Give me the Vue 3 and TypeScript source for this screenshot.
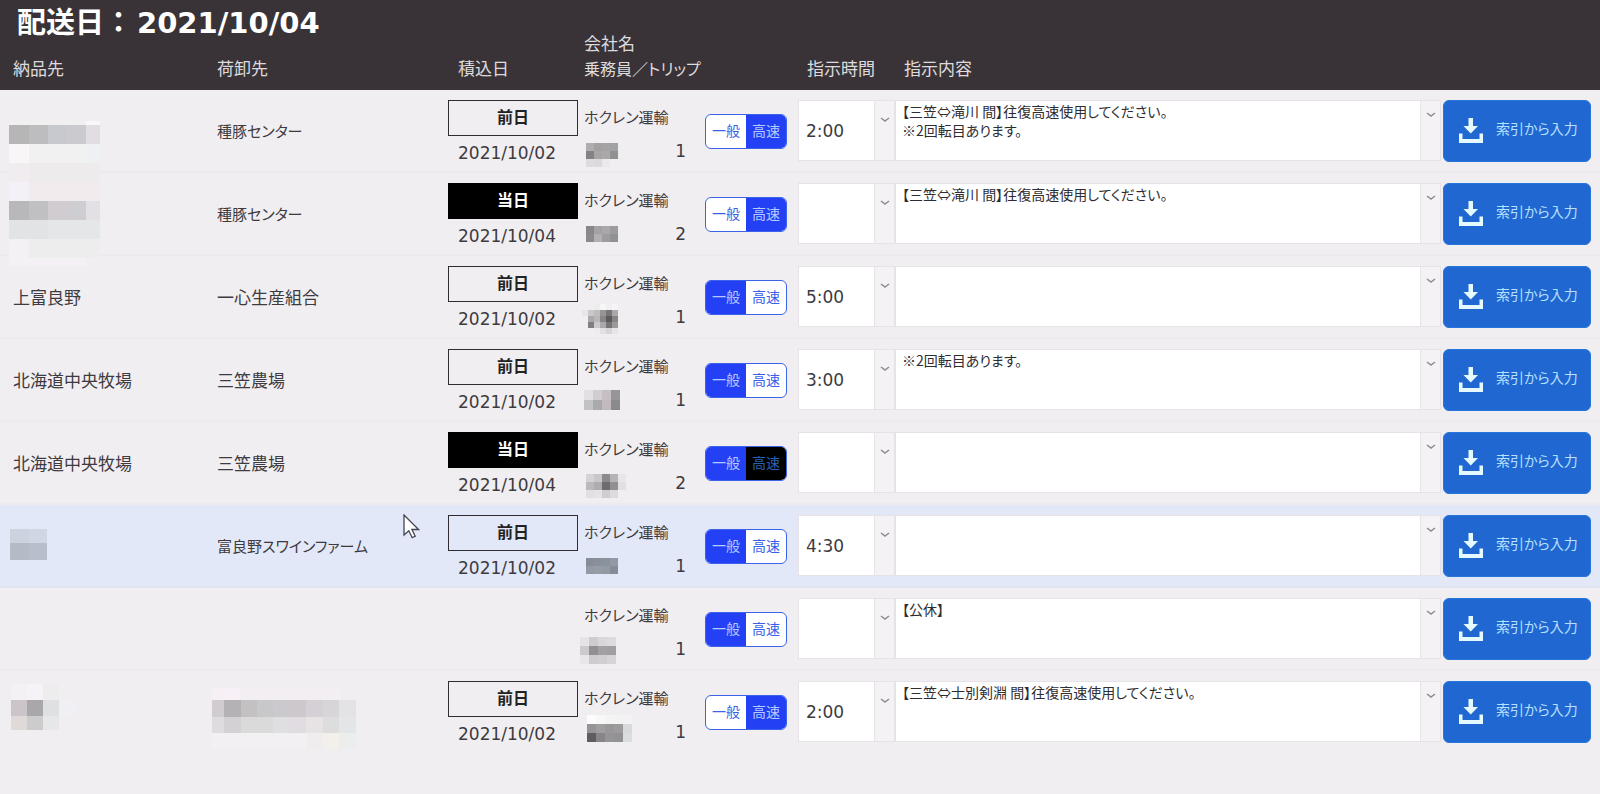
<script setup lang="ts">
import { reactive } from 'vue'

type Tile = [x: number, y: number, w: number, h: number, fill: string]

interface Mosaic {
  width: number
  height: number
  tiles: Tile[]
}

interface Delivery {
  id: number
  destination: string | Mosaic
  unloading: string | Mosaic
  loadType: '前日' | '当日' | ''
  loadDate: string
  company: string
  driver: Mosaic
  trip: number
  road: 'general' | 'highway'
  roadLocked?: boolean
  time: string
  note: string
  selected?: boolean
}

/** Lays out equal tiles from a grid of colours; an empty colour leaves a gap. */
function grid(size: [number, number], origin: [number, number], rows: string[][]): Mosaic {
  const tiles: Tile[] = []
  rows.forEach((row, r) =>
    row.forEach((fill, c) => {
      if (fill) tiles.push([origin[0] + c * size[0], origin[1] + r * size[1], size[0], size[1], fill])
    }),
  )
  const columns = Math.max(...rows.map((row) => row.length))
  return { width: origin[0] + columns * size[0], height: origin[1] + rows.length * size[1], tiles }
}

const isMosaic = (value: string | Mosaic): value is Mosaic => typeof value !== 'string'

/** Names written with katakana are set one step smaller so that they stay compact. */
const hasKana = (value: string | Mosaic) => !isMosaic(value) && /[\u30a0-\u30ff]/.test(value)

const deliveries = reactive<Delivery[]>([
  {
    id: 1,
    destination: {
      width: 91,
      height: 52,
      tiles: [
        [0, 0, 77, 4, '#f0f0f0'], [77, 0, 14, 4, '#f9f7f9'],
        [0, 4, 20, 19, '#b7b6b7'], [20, 4, 19, 19, '#bdbdbf'], [39, 4, 19, 19, '#c8c9ce'], [58, 4, 19, 19, '#cbcbcf'], [77, 4, 14, 19, '#e1dde3'],
        [0, 23, 20, 19, '#f9f6f8'], [20, 23, 57, 19, '#f1f1f1'], [77, 23, 14, 19, '#eef0f3'],
        [0, 42, 20, 10, '#f0ecef'], [20, 42, 71, 10, '#edebec'],
      ],
    },
    unloading: '種豚センター',
    loadType: '前日',
    loadDate: '2021/10/02',
    company: 'ホクレン運輸',
    driver: grid([8, 8], [2, 4], [
      ['#b0adae', '#a3a1a2', '#a5a4a5', '#a2a1a3'],
      ['#858283', '#a7a5a6', '#aaa9aa', '#929192'],
      ['#dedcde', '#dcdbdc', '#ebe9eb', ''],
    ]),
    trip: 1,
    road: 'highway',
    time: '2:00',
    note: '【三笠⇔滝川 間】往復高速使用してください。\n※2回転目あります。',
  },
  {
    id: 2,
    destination: {
      width: 91,
      height: 93,
      tiles: [
        [0, 0, 20, 9, '#f0ecef'], [20, 0, 71, 9, '#edebec'],
        [0, 9, 20, 19, '#f4f0f7'], [20, 9, 71, 19, '#f1ebee'],
        [0, 28, 20, 19, '#b8b7b9'], [20, 28, 19, 19, '#c0c0c3'], [39, 28, 19, 19, '#d0ccd0'], [58, 28, 19, 19, '#cecdd1'], [77, 28, 14, 19, '#e2e0e5'],
        [0, 47, 39, 19, '#e2e3e4'], [39, 47, 52, 19, '#e5e6e7'],
        [0, 66, 20, 27, '#f3f1f4'], [20, 66, 71, 19, '#ededee'], [20, 85, 57, 8, '#f5f0f5'],
      ],
    },
    unloading: '種豚センター',
    loadType: '当日',
    loadDate: '2021/10/04',
    company: 'ホクレン運輸',
    driver: grid([8, 8], [2, 4], [
      ['#888687', '#a3a2a4', '#aaa8aa', '#9c9b9d'],
      ['#8b898a', '#b2b0b3', '#9d9c9e', '#929193'],
    ]),
    trip: 2,
    road: 'highway',
    time: '',
    note: '【三笠⇔滝川 間】往復高速使用してください。',
  },
  {
    id: 3,
    destination: '上富良野',
    unloading: '一心生産組合',
    loadType: '前日',
    loadDate: '2021/10/02',
    company: 'ホクレン運輸',
    driver: grid([6, 6], [-2, -1], [
      ['', '', '#eeeced', '#f7f6f7', '#f1f0f1', '#f6f4f6'],
      ['#e7e5e7', '#c9c8c9', '#bfbebf', '#969495', '#777576', '#aaa8a9'],
      ['', '#aaa8a9', '#b9b8b9', '#878586', '#5c5a5b', '#878586'],
      ['', '#807e7f', '#cccacc', '#aaa8aa', '#777576', '#9b999a'],
      ['', '', '#eeeced', '#e2e0e2', '#d7d5d7', '#e7e5e7'],
    ]),
    trip: 1,
    road: 'general',
    time: '5:00',
    note: '',
  },
  {
    id: 4,
    destination: '北海道中央牧場',
    unloading: '三笠農場',
    loadType: '前日',
    loadDate: '2021/10/02',
    company: 'ホクレン運輸',
    driver: grid([9, 10], [0, 2], [
      ['#e2e0e2', '#d0ced1', '#c5bfc3', '#979597'],
      ['#c2c1c3', '#aaa9ac', '#c2b9bf', '#8a898c'],
    ]),
    trip: 1,
    road: 'general',
    time: '3:00',
    note: '※2回転目あります。',
  },
  {
    id: 5,
    destination: '北海道中央牧場',
    unloading: '三笠農場',
    loadType: '当日',
    loadDate: '2021/10/04',
    company: 'ホクレン運輸',
    driver: grid([8, 8], [2, 3], [
      ['#d6d3d5', '#c9c7ca', '#8c8a8c', '#b4b3b5', '#e8e6e9'],
      ['#bbb9bb', '#aeacae', '#6f6c6f', '#918f91', '#e2e0e3'],
      ['#e1dfe1', '#e5e3e5', '#cfcdcf', '#dddbdd', ''],
    ]),
    trip: 2,
    road: 'general',
    roadLocked: true,
    time: '',
    note: '',
  },
  {
    id: 6,
    destination: {
      width: 38,
      height: 31,
      tiles: [
        [1, 0, 19, 14, '#cdd2df'], [20, 0, 18, 14, '#d1d6e5'],
        [1, 14, 19, 17, '#b5bac7'], [20, 14, 18, 17, '#b8becb'],
      ],
    },
    unloading: '富良野スワインファーム',
    loadType: '前日',
    loadDate: '2021/10/02',
    company: 'ホクレン運輸',
    driver: grid([8, 8], [2, 4], [
      ['#878d96', '#8a9099', '#88939e', '#9299a4'],
      ['#929aa5', '#979da5', '#929aa4', '#868d98'],
    ]),
    trip: 1,
    road: 'general',
    time: '4:30',
    note: '',
    selected: true,
  },
  {
    id: 7,
    destination: '',
    unloading: '',
    loadType: '',
    loadDate: '',
    company: 'ホクレン運輸',
    driver: grid([9, 9], [-4, 0], [
      ['#e5e3e5', '#cecdce', '#d9d7d9', '#dddbdd'],
      ['#cccacc', '#929092', '#a3a1a3', '#a09ea0'],
      ['#e8e6e8', '#cecdce', '#d0ced0', '#d6d4d6'],
    ]),
    trip: 1,
    road: 'general',
    time: '',
    note: '【公休】',
  },
  {
    id: 8,
    destination: {
      width: 68,
      height: 46,
      tiles: [
        [2, 0, 16, 16, '#f3f1f4'], [18, 0, 16, 16, '#f5f3f7'], [34, 0, 16, 16, '#eeeded'],
        [2, 16, 16, 16, '#cbc5ca'], [18, 16, 16, 16, '#a9a7a9'], [34, 16, 16, 16, '#dfe0e1'], [50, 16, 17, 16, '#f0eff3'],
        [2, 32, 16, 14, '#dfd9d7'], [18, 32, 16, 14, '#cdcccd'], [34, 32, 16, 14, '#e6e7e8'],
      ],
    },
    unloading: {
      width: 144,
      height: 62,
      tiles: [
        [0, 0, 12, 12, '#f6f0f5'], [12, 0, 16, 12, '#f7f0f6'], [28, 0, 100, 12, '#f3eef2'],
        [0, 12, 12, 17, '#d0ccd0'], [12, 12, 17, 17, '#b5b2b5'], [29, 12, 16, 17, '#c3c1c2'], [45, 12, 16, 17, '#c8c7c9'], [61, 12, 17, 17, '#cbc9cd'], [78, 12, 16, 17, '#cdc8cc'], [94, 12, 17, 17, '#d5d0d6'], [111, 12, 16, 17, '#d8d5d9'], [127, 12, 17, 17, '#e3e2e5'],
        [0, 29, 12, 16, '#dfdce0'], [12, 29, 17, 16, '#d3d1d4'], [29, 29, 32, 16, '#dadada'], [61, 29, 17, 16, '#dfdee0'], [78, 29, 16, 16, '#e0dce1'], [94, 29, 17, 16, '#e7e2e3'], [111, 29, 16, 16, '#dddddd'], [127, 29, 17, 16, '#e4e5e6'],
        [0, 45, 95, 16, '#f2f0f3'], [95, 45, 16, 16, '#efedee'], [111, 45, 16, 16, '#f3efeb'], [127, 45, 17, 16, '#eceeed'],
      ],
    },
    loadType: '前日',
    loadDate: '2021/10/02',
    company: 'ホクレン運輸',
    driver: grid([9, 9], [3, -5], [
      ['#fdfcfd', '#f9f8f9', '#f5f4f5', '#f4f3f4', '#f3f2f3'],
      ['#969495', '#a09ea0', '#999799', '#9d9b9e', '#d9d9dc'],
      ['#615d5f', '#878587', '#969596', '#929193', '#dbdcde'],
    ]),
    trip: 1,
    road: 'highway',
    time: '2:00',
    note: '【三笠⇔士別剣淵 間】往復高速使用してください。',
  },
])
</script>

<template>
  <main class="schedule">
    <table class="deliveries">
      <caption>配送日：<time datetime="2021-10-04">2021/10/04</time></caption>
      <colgroup>
        <col class="col-destination" />
        <col class="col-unloading" />
        <col class="col-load" />
        <col class="col-driver" />
        <col class="col-road" />
        <col class="col-time" />
        <col />
        <col class="col-action" />
      </colgroup>
      <thead>
        <tr>
          <th scope="col" class="inset">納品先</th>
          <th scope="col" class="inset">荷卸先</th>
          <th scope="col" class="load-head">積込日</th>
          <th scope="col">会社名<br /><span class="crew-head">乗務員／トリップ</span></th>
          <td></td>
          <th scope="col" class="field-head">指示時間</th>
          <th scope="col" class="field-head">指示内容</th>
          <td></td>
        </tr>
      </thead>
      <tbody>
        <tr v-for="row in deliveries" :key="row.id" :class="{ selected: row.selected }">
          <td
            v-for="(place, i) in [row.destination, row.unloading]"
            :key="i"
            class="place inset"
            :class="{ kana: hasKana(place) }"
          >
            <svg
              v-if="isMosaic(place)"
              class="place-mosaic"
              :class="[`mosaic-${row.id}`, { wide: i === 1 }]"
              :width="place.width"
              :height="place.height"
              shape-rendering="crispEdges"
              aria-hidden="true"
            >
              <rect v-for="(t, n) in place.tiles" :key="n" :x="t[0]" :y="t[1]" :width="t[2]" :height="t[3]" :fill="t[4]" />
            </svg>
            <template v-else>{{ place }}</template>
            <svg v-if="row.selected && i === 1" class="pointer" width="17" height="25" viewBox="0 0 17 25" aria-hidden="true">
              <path d="M1 1v20l4.800-4.300 3.400 7 3-1.400-3.300-6.800H15.500z" fill="#fff" stroke="#45454f" stroke-width="1.300" />
            </svg>
          </td>
          <td>
            <div v-if="row.loadType" class="load">
              <span class="badge" :class="{ today: row.loadType === '当日' }">{{ row.loadType }}</span>
              <span class="date">{{ row.loadDate }}</span>
            </div>
          </td>
          <td>
            <div class="driver">
              <span class="company">{{ row.company }}</span>
              <span class="crew">
                <svg class="name-mosaic" width="44" height="24" shape-rendering="crispEdges" aria-hidden="true">
                  <rect v-for="(t, n) in row.driver.tiles" :key="n" :x="t[0]" :y="t[1]" :width="t[2]" :height="t[3]" :fill="t[4]" />
                </svg>
                <span>{{ row.trip }}</span>
              </span>
            </div>
          </td>
          <td>
            <div class="road" role="radiogroup" aria-label="道路種別">
              <label>
                <input v-model="row.road" type="radio" :name="`road-${row.id}`" value="general" />
                <span>一般</span>
              </label>
              <label :class="{ locked: row.roadLocked }">
                <input v-model="row.road" type="radio" :name="`road-${row.id}`" value="highway" />
                <span>高速</span>
              </label>
            </div>
          </td>
          <td>
            <div class="field time">
              <input v-model="row.time" type="text" aria-label="指示時間" />
              <button type="button" aria-label="時間を選択">
                <svg width="10" height="6" viewBox="0 0 10 6"><path d="M1 1l4 3 4-3" /></svg>
              </button>
            </div>
          </td>
          <td>
            <div class="field note">
              <textarea v-model="row.note" aria-label="指示内容" spellcheck="false"></textarea>
              <button type="button" aria-label="内容を選択">
                <svg width="10" height="6" viewBox="0 0 10 6"><path d="M1 1l4 3 4-3" /></svg>
              </button>
            </div>
          </td>
          <td>
            <button type="button" class="index-button">
              <svg width="26" height="26" viewBox="0 0 26 26" aria-hidden="true">
                <path d="M10.500 0h4.500v8h5l-7.250 7.500L5.500 8h5z" />
                <path d="M1 15.500h3.500V21h17v-5.500H25V25H1z" />
              </svg>
              <span>索引から入力</span>
            </button>
          </td>
        </tr>
      </tbody>
    </table>
  </main>
</template>

<style>
body {
  margin: 0;
  background: #f1eef2;
}
</style>

<style scoped>
.schedule {
  min-height: 100vh;
  min-width: 1200px;
  background: #f1eef2;
  color: #3d3b40;
  font-family: "DejaVu Sans", "Noto Sans CJK JP", sans-serif;
  font-size: 17px;
  font-feature-settings: "palt";
}

.deliveries {
  width: 100%;
  table-layout: fixed;
  border-collapse: separate;
  border-spacing: 0;
}

caption {
  padding: 14px 17px 0;
  background: #393337;
  color: #fff;
  font-size: 29px;
  font-weight: 700;
  line-height: 18px;
  text-align: left;
  white-space: nowrap;
  font-feature-settings: normal;
}

caption time { padding-left: 4px; }

.col-destination { width: 204px; }
.col-unloading { width: 244px; }
.col-load { width: 136px; }
.col-driver { width: 121px; }
.col-road { width: 93px; }
.col-time { width: 97px; }
.col-action { width: 157px; }

th,
td {
  box-sizing: border-box;
  padding: 0;
  text-align: left;
  vertical-align: top;
}

thead th,
thead td {
  padding-bottom: 8px;
  background: #393337;
  color: #dedbde;
  font-weight: 400;
  line-height: 25px;
  vertical-align: bottom;
  white-space: nowrap;
}

.crew-head { font-size: 16px; }

thead .load-head { padding-left: 10px; }
thead .field-head { padding-left: 9px; }

tbody td {
  height: 83px;
  border-bottom: 2px solid #eceaee;
}

tbody tr:last-child td { border-bottom-color: transparent; }

tbody .selected td {
  background: #e2e8f8;
  border-bottom-color: #dfe3f3;
}

thead .inset,
tbody .inset { padding-left: 13px; }

tbody .place {
  position: relative;
  padding-top: 30px;
  line-height: 24px;
  white-space: nowrap;
}

tbody .kana,
.company { font-size: 15px; }

.place-mosaic {
  position: absolute;
  left: 9px;
  top: 31px;
  z-index: 1;
}

.mosaic-2 { top: 0; }
.mosaic-6 { top: 24px; }
.mosaic-8 { top: 13px; }
.mosaic-8.wide {
  left: 8px;
  top: 17px;
}

.pointer {
  position: absolute;
  left: 199px;
  top: 9px;
}

.load {
  display: flex;
  flex-direction: column;
  width: 130px;
  padding-top: 10px;
}

.badge {
  box-sizing: border-box;
  height: 36px;
  border: 1px solid #2f2d31;
  color: #222;
  font-size: 16px;
  font-weight: 700;
  line-height: 34px;
  text-align: center;
}

.badge.today {
  border-color: #000;
  background: #000;
  color: #fff;
}

.date {
  padding: 5px 0 0 10px;
  line-height: 24px;
}

.driver {
  display: flex;
  flex-direction: column;
  padding: 16px 19px 0 0;
  line-height: 24px;
  white-space: nowrap;
}

.crew {
  display: flex;
  justify-content: space-between;
  padding-top: 9px;
}

.name-mosaic { overflow: visible; }

.road {
  display: flex;
  box-sizing: border-box;
  width: 82px;
  height: 35px;
  margin-top: 24px;
  overflow: hidden;
  border: 1px solid #3a63ea;
  border-radius: 6px;
  background: #fff;
}

.road label {
  position: relative;
  flex: 1;
}

.road input {
  position: absolute;
  inset: 0;
  margin: 0;
  opacity: 0;
}

.road span {
  display: block;
  color: #3a5fe8;
  font-size: 14px;
  line-height: 32px;
  height: 33px;
  text-align: center;
  font-feature-settings: normal;
}

.road input:checked + span {
  background: #2440f5;
  color: #b4ccff;
}

.road .locked span {
  background: #000;
  color: #2a60b0;
}

.field {
  display: flex;
  box-sizing: border-box;
  height: 61px;
  margin-top: 10px;
  border: 1px solid #e6e2e7;
  background: #fff;
}

.field input,
.field textarea {
  flex: 1;
  box-sizing: border-box;
  min-width: 0;
  margin: 0;
  border: 0;
  outline: 0;
  background: #fff;
  color: #3d3b40;
  font: inherit;
  font-feature-settings: inherit;
}

.field input { padding: 1px 7px 0; }

.field textarea {
  padding: 1px 6px;
  overflow: hidden;
  color: #2f2d31;
  font-family: "Noto Sans CJK JP", sans-serif;
  font-size: 14px;
  line-height: 19px;
  resize: none;
}

.field button {
  display: flex;
  justify-content: center;
  width: 20px;
  padding: 16px 0 0;
  border: 0;
  border-left: 1px solid #e6e2e7;
  background: #f5f2f6;
}

.field.note { margin-right: 2px; }
.field.note button { padding-top: 11px; }

.field svg path {
  fill: none;
  stroke: #8e8b90;
  stroke-width: 1.5;
}

.index-button {
  display: flex;
  align-items: center;
  box-sizing: border-box;
  width: 148px;
  height: 62px;
  margin-top: 10px;
  padding: 0 0 0 14px;
  gap: 12px;
  border: 1px solid #2676dc;
  border-radius: 6px;
  background: #2167d2;
  color: #b5e0ff;
  font: inherit;
  font-size: 14px;
  font-feature-settings: inherit;
  white-space: nowrap;
}

.index-button svg {
  flex: none;
  fill: #e4faff;
}

.index-button span {
  padding-bottom: 6px;
}
</style>
